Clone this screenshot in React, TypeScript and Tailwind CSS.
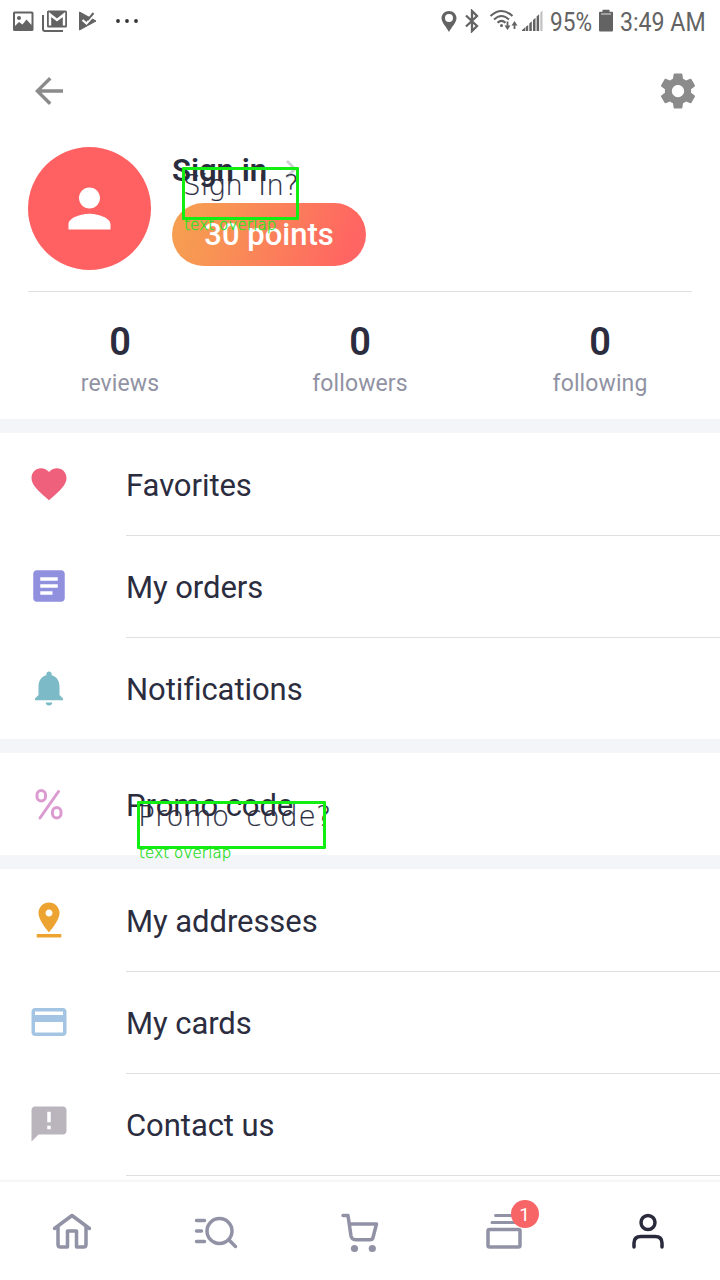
import type { ReactNode } from "react";

function Glyph({ d, className }: { d: string; className: string }) {
  return (
    <svg viewBox="0 0 24 24" fill="currentColor" className={`block shrink-0 ${className}`}>
      <path d={d} />
    </svg>
  );
}

const ARROW = "M20 11.050H7.700l5.720-5.640L12 4l-8 8 8 8 1.410-1.410L7.700 12.950H20z";
const GEAR =
  "M19.43 12.98c.04-.32.07-.64.07-.98s-.03-.66-.07-.98l2.11-1.65c.19-.15.24-.42.12-.64l-2-3.46c-.12-.22-.39-.3-.61-.22l-2.49 1c-.52-.4-1.08-.73-1.69-.98l-.38-2.65C14.46 2.18 14.25 2 14 2h-4c-.25 0-.46.18-.49.42l-.38 2.65c-.61.25-1.17.59-1.69.98l-2.49-1c-.23-.09-.49 0-.61.22l-2 3.46c-.13.22-.07.49.12.64l2.11 1.65c-.04.32-.07.65-.07.98s.03.66.07.98l-2.11 1.65c-.19.15-.24.42-.12.64l2 3.46c.12.22.39.3.61.22l2.49-1c.52.4 1.08.73 1.69.98l.38 2.65c.03.24.24.42.49.42h4c.25 0 .46-.18.49-.42l.38-2.65c.61-.25 1.17-.59 1.69-.98l2.49 1c.23.09.49 0 .61-.22l2-3.46c.12-.22.07-.49-.12-.64l-2.11-1.65zM12 15.5c-1.93 0-3.5-1.57-3.5-3.5s1.57-3.5 3.5-3.5 3.5 1.57 3.5 3.5-1.57 3.5-3.5 3.5z";
const PERSON =
  "M12 12c2.21 0 4-1.79 4-4s-1.79-4-4-4-4 1.79-4 4 1.79 4 4 4zm0 2c-2.67 0-8 1.34-8 4v2h16v-2c0-2.66-5.33-4-8-4z";
const HEART =
  "M12 21.35l-1.45-1.32C5.4 15.36 2 12.28 2 8.5 2 5.42 4.42 3 7.5 3c1.74 0 3.41.81 4.5 2.09C13.09 3.81 14.76 3 16.5 3 19.58 3 22 5.42 22 8.5c0 3.78-3.4 6.86-8.55 11.54L12 21.35z";
const ARTICLE =
  "M19 3H5c-1.1 0-2 .9-2 2v14c0 1.1.9 2 2 2h14c1.1 0 2-.9 2-2V5c0-1.1-.9-2-2-2zm-5 14H7v-2h7v2zm3-4H7v-2h10v2zm0-4H7V7h10v2z";
const BELL =
  "M12 22c1.1 0 1.9-.7 1.9-1.700h-3.800c0 1 .8 1.700 1.900 1.700zm6-6v-5c0-3.07-1.64-5.64-4.5-6.32V4c0-.83-.67-1.5-1.5-1.5s-1.5.67-1.5 1.5v.68C7.63 5.36 6 7.92 6 11v5l-2 2v1h16v-1l-2-2z";
const PIN_DROP =
  "M18 8c0-3.31-2.69-6-6-6S6 4.69 6 8c0 4.5 6 11 6 11s6-6.5 6-11zm-8 0c0-1.1.9-2 2-2s2 .9 2 2-.89 2-2 2c-1.1 0-2-.9-2-2zM5 20v2h14v-2H5z";
const CARD =
  "M20 4H4c-1.11 0-1.99.89-1.99 2L2 18c0 1.11.89 2 2 2h16c1.11 0 2-.89 2-2V6c0-1.11-.89-2-2-2zm0 14H4v-6h16v6zm0-10H4V6h16v2z";
const FEEDBACK =
  "M20 2H4c-1.1 0-1.99.9-1.99 2L2 22l4-4h14c1.1 0 2-.9 2-2V4c0-1.1-.9-2-2-2zm-7 13h-2v-2h2v2zm0-4h-2V5h2v6z";

function StatusBar() {
  return (
    <div className="flex h-12 shrink-0 items-start justify-between pl-3 pr-[13px] text-[#636363]">
      <div className="flex pt-[10px]">
        <svg viewBox="0 0 22 22" className="block h-[22px] w-[22px]">
          <path
            fillRule="evenodd"
            fill="currentColor"
            d="M2.500 1.500h17.500q1.500 0 1.500 1.500v16.500q0 1.500-1.500 1.500H2.500Q1 21 1 19.500V3q0-1.500 1.500-1.500zM3 3.500V16l4-4 3.500 2.500 4-5L19.500 15V3.500z"
          />
          <circle cx="7" cy="8" r="2" fill="currentColor" />
        </svg>
        <svg viewBox="0 0 26 22" className="ml-2 block h-[22px] w-[26px]">
          <path d="M1 5v14q0 2 2 2h18" fill="none" stroke="currentColor" strokeWidth="2" />
          <rect x="5" y="0.500" width="20" height="17" rx="1.500" fill="currentColor" />
          <path d="M8 15.500V4.500L15 10l7-5.500v11" fill="none" stroke="white" strokeWidth="2.400" />
        </svg>
        <svg viewBox="0 0 20 22" className="ml-[10px] block h-[22px] w-5">
          <path
            d="M1.500 2L18 11 1.500 20z"
            fill="currentColor"
            stroke="currentColor"
            strokeLinejoin="round"
          />
          <path d="M4.500 10l4 3.500L16 5" fill="none" stroke="white" strokeWidth="2.200" />
          <path d="M8 7.500l2.200 1.800L15.500 3" fill="none" stroke="currentColor" strokeWidth="2" />
        </svg>
        <svg viewBox="0 0 24 22" fill="#333" className="ml-[17px] block h-[22px] w-6">
          <circle cx="3" cy="11" r="1.900" />
          <circle cx="12" cy="11" r="1.900" />
          <circle cx="21" cy="11" r="1.900" />
        </svg>
      </div>
      <div className="flex pt-[9px]">
        <svg viewBox="0 0 16 24" className="-ml-1 mr-px block h-6 w-4">
          <path
            fill="currentColor"
            fillRule="evenodd"
            d="M8 2C3.700 2 .500 5.200.500 9.200.500 13.500 5.500 18 8 23c2.500-5 7.500-9.500 7.500-13.800C15.500 5.200 12.300 2 8 2zM8 5a4 4 0 1 1 0 8a4 4 0 1 1 0-8z"
          />
        </svg>
        <svg viewBox="0 0 16 24" className="ml-[6px] mr-[10px] block h-6 w-4">
          <path
            d="M2 6.500l11 10.500-5 5V2l5 5L2 17.500"
            fill="none"
            stroke="currentColor"
            strokeWidth="2.300"
          />
        </svg>
        <svg
          viewBox="0 0 30 24"
          fill="none"
          stroke="currentColor"
          strokeWidth="2"
          className="-ml-px mr-px block h-6 w-[30px]"
        >
          <path d="M1.500 7Q12.500-3 23.500 7M5 10.500q7.500-7 15 0M8.500 13.700q4-3.700 8 0" />
          <circle cx="12.500" cy="16.500" r="1.500" fill="currentColor" stroke="none" />
          <path d="M18.500 12.500v6M25.500 20V15" strokeWidth="1.800" />
          <path d="M15.500 16.500h6l-3 4.500zM22.500 16.500h6l-3-4.500z" fill="currentColor" stroke="none" />
        </svg>
        <svg viewBox="0 0 22 24" fill="currentColor" className="ml-px block h-6 w-[22px]">
          <path d="M1 22v-1l3-2.500V22zM4.600 18l2.600-2v6H4.600zM8.300 14.500l2.500-2.200V22H8.300zM12 11l2.500-2.300V22H12zM15.600 7.500l2.500-2.300V22h-2.500z" />
          <path d="M19.300 3.500l2.200-2V22h-2.200z" opacity=".4" />
        </svg>
        <div className="ml-[7px] w-[46px]">
          <span className="inline-block origin-left scale-x-[.87] whitespace-nowrap text-[26px] leading-[26px]">
            95%
          </span>
        </div>
        <svg viewBox="0 0 16 24" className="ml-[2px] block h-6 w-4">
          <path
            d="M4.500.800h7v2H14q1 0 1 1V21q0 1.500-1 1.500H2q-1 0-1-1.500V3.800q0-1 1-1h2.500z"
            fill="currentColor"
          />
          <path d="M3 5h10" stroke="white" opacity=".8" />
        </svg>
        <div className="ml-[6px] w-[87px]">
          <span className="inline-block origin-left scale-x-[.89] whitespace-nowrap text-[26px] leading-[26px]">
            3:49 AM
          </span>
        </div>
      </div>
    </div>
  );
}

function Stat({ value, label }: { value: number; label: string }) {
  return (
    <div className="flex flex-1 flex-col items-center pt-[27px]">
      <span className="text-[38px] font-semibold leading-[46px]">{value}</span>
      <span className="mt-[5px] text-[23px] leading-[28px] tracking-[.1px] text-[#9192a3]">{label}</span>
    </div>
  );
}

function Row({
  icon,
  label,
  line = false,
  children,
}: {
  icon: ReactNode;
  label: string;
  line?: boolean;
  children?: ReactNode;
}) {
  return (
    <div className="relative flex h-[102px] shrink-0 pl-7">
      <div className="flex w-[98px] items-center">{icon}</div>
      <div
        className={`-mb-px flex flex-1 items-center border-b pt-1 text-[31px] tracking-[-.06px] ${line ? "border-[#dfe0e3]" : "border-transparent"}`}
      >
        {label}
      </div>
      {children}
    </div>
  );
}

function Band() {
  return <div className="h-[14px] shrink-0 bg-[#f3f5f9]" />;
}

function NavIcon({ children, active = false }: { children: ReactNode; active?: boolean }) {
  return (
    <div className="flex flex-1 justify-center pt-[25px]">
      <svg
        viewBox="0 0 48 48"
        fill="none"
        stroke="currentColor"
        strokeWidth="3.500"
        strokeLinecap="round"
        strokeLinejoin="round"
        className={`block size-12 ${active ? "text-[#292b3d]" : "text-[#9192a5]"}`}
      >
        {children}
      </svg>
    </div>
  );
}

export default function App() {
  return (
    <div className="relative flex h-[1280px] w-[720px] flex-col overflow-hidden bg-white font-['Roboto',sans-serif] text-[#2b2d3f]">
      <StatusBar />
      <header className="flex h-[86px] shrink-0 items-center justify-between pl-7 pr-[21px] text-[#8b8b8b]">
        <Glyph d={ARROW} className="size-[42px]" />
        <Glyph d={GEAR} className="size-[42px]" />
      </header>

      <section className="mx-7 flex h-[158px] shrink-0 border-b-[1.500px] border-[#dfe0e3] pt-[13px]">
        <div className="flex size-[123px] items-center justify-center rounded-full bg-[#ff6162] text-white">
          <Glyph d={PERSON} className="size-[63px]" />
        </div>
        <div className="relative ml-[21px] flex flex-col pt-[7px]">
          <div className="flex h-[34px] items-center">
            <span className="text-[31px] font-semibold leading-[34px]">Sign in</span>
            <svg viewBox="0 0 12 20" className="-mt-1 ml-[18px] block h-5 w-3">
              <path d="M2 2l8 8-8 8" fill="none" stroke="#cfcfd3" strokeWidth="2.800" />
            </svg>
          </div>
          <div className="mt-[15px] flex h-[63px] w-[194px] items-center justify-center rounded-full bg-[linear-gradient(110deg,#f5a14f_0%,#f89454_25%,#ff6562_90%)] pt-px text-[31px] font-medium text-white">
            30 points
          </div>
          <span className="absolute left-[11px] top-[22px] whitespace-pre font-['DejaVu_Sans',sans-serif] text-[28px] font-extralight leading-[34px] [word-spacing:6px] [-webkit-text-stroke:.2px_#2b2d3f]">
            Sign In?
          </span>
          <span className="absolute left-[12px] top-[68px] whitespace-pre font-['DejaVu_Sans',sans-serif] text-[15px] font-extralight leading-5 tracking-[.15px] text-[#22e51c] [-webkit-text-stroke:.3px_#22e51c]">
            text overlap
          </span>
          <div className="absolute left-[10px] top-[20px] h-[53px] w-[117px] rounded-[1px] border-[3px] border-[#12ed12]" />
        </div>
      </section>

      <section className="flex h-[127px] shrink-0">
        <Stat value={0} label="reviews" />
        <Stat value={0} label="followers" />
        <Stat value={0} label="following" />
      </section>

      <Band />
      <Row line label="Favorites" icon={<Glyph d={HEART} className="size-[42px] text-[#ef607c]" />} />
      <Row line label="My orders" icon={<Glyph d={ARTICLE} className="size-[42px] text-[#9090df]" />} />
      <Row label="Notifications" icon={<Glyph d={BELL} className="size-[42px] text-[#7dbac8]" />} />
      <Band />
      <Row
        label="Promo code"
        icon={
          <svg
            viewBox="0 0 42 42"
            fill="none"
            stroke="#dc9bd0"
            strokeWidth="3"
            strokeLinecap="round"
            className="block size-[42px]"
          >
            <path d="M30.500 8.500L12 35" />
            <rect x="9" y="7.500" width="8.500" height="10.500" rx="4.250" />
            <rect x="24.500" y="24.500" width="8.500" height="10.500" rx="4.250" />
          </svg>
        }
      >
        <span className="absolute left-[138px] top-[47px] whitespace-pre font-['DejaVu_Sans',sans-serif] text-[28px] font-extralight leading-[34px] tracking-[.6px] [word-spacing:7px] [-webkit-text-stroke:.2px_#2b2d3f]">
          Promo code?
        </span>
        <span className="absolute left-[139px] top-[90px] z-10 whitespace-pre font-['DejaVu_Sans',sans-serif] text-[15px] font-extralight leading-5 tracking-[.15px] text-[#22dc1c] [-webkit-text-stroke:.3px_#22dc1c]">
          text overlap
        </span>
        <div className="absolute left-[137px] top-[48px] h-[48px] w-[189px] rounded-[1px] border-[3px] border-[#12ed12]" />
      </Row>
      <Band />
      <Row line label="My addresses" icon={<Glyph d={PIN_DROP} className="size-[42px] text-[#eda32f]" />} />
      <Row line label="My cards" icon={<Glyph d={CARD} className="size-[42px] text-[#a3c5e3]" />} />
      <Row line label="Contact us" icon={<Glyph d={FEEDBACK} className="size-[42px] text-[#bab5bc]" />} />

      <div className="mt-px h-[6px] shrink-0 bg-[linear-gradient(to_bottom,#fff_30%,#f4f4f4)]" />
      <nav className="flex flex-1 bg-white">
        <NavIcon>
          <path d="M6.500 21.500L24 8.500l17.500 13M10 20v17.500q0 2.500 2.500 2.500H19.500V24h9v16h7q2.500 0 2.500-2.500V20" />
        </NavIcon>
        <NavIcon>
          <circle cx="27.500" cy="24" r="12.500" />
          <path d="M4.500 13.500h8M4.500 24h5M4.500 34.500h8M37 33l6.500 6.500" />
        </NavIcon>
        <NavIcon>
          <path d="M7 8.500h5l3 20.500q.7 3.700 4.500 3.700h14.500q2.500 0 3-2.200L40.500 17H14" />
          <circle cx="18.500" cy="41.500" r="3.600" fill="currentColor" stroke="none" />
          <circle cx="36.300" cy="41.500" r="3.600" fill="currentColor" stroke="none" />
        </NavIcon>
        <div className="relative flex flex-1">
          <NavIcon>
            <rect x="8" y="22.500" width="32" height="17.500" rx="1.500" />
            <path d="M12 15.500h24M15.500 8.500h18" strokeWidth="3" />
          </NavIcon>
          <span className="absolute left-[79px] top-[18px] flex size-7 items-center justify-center rounded-full bg-[#f86566] pr-px text-[19px] leading-none text-white">
            1
          </span>
        </div>
        <NavIcon active>
          <circle cx="24" cy="15.500" r="7" />
          <path d="M10 40v-4q0-6.500 7-6.500h14q7 0 7 6.500v4" />
        </NavIcon>
      </nav>
    </div>
  );
}
